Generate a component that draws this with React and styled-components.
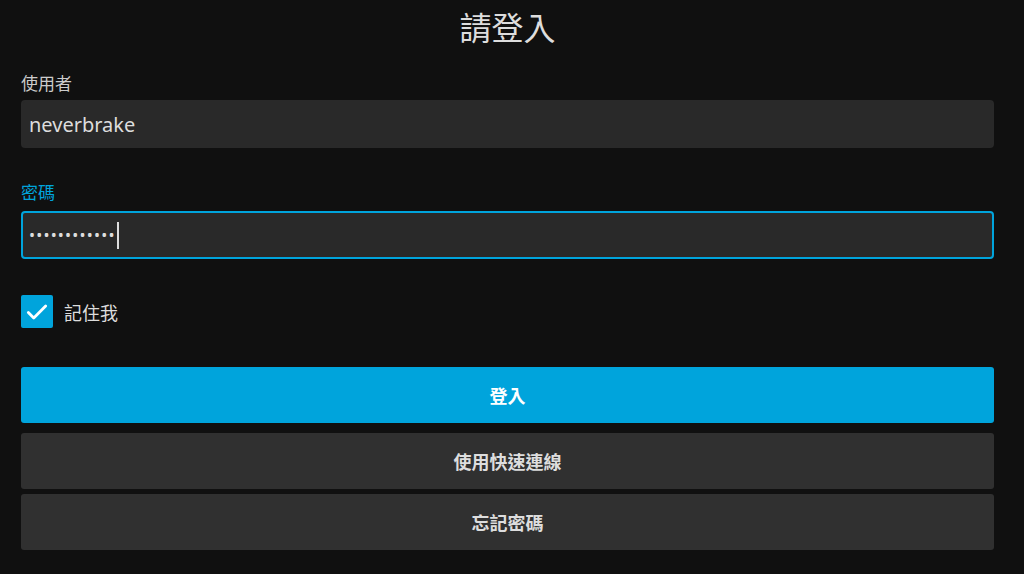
import React from 'react'
import styled, { createGlobalStyle } from 'styled-components'

const Accent = '#00a4dc'
const Font = `"Noto Sans", "Noto Sans CJK TC", sans-serif`

const Global = createGlobalStyle`
html, body { margin:0; padding:0; background:#101010; }
body { font-family:${Font}; color:#ddd; }
`

const Page = styled.div`
padding:0 30px 0 21px;
display:flex;
flex-direction:column;
`
const Title = styled.h1`
margin:6px 0 0;
font-size:32px;
font-weight:400;
line-height:44px;
text-align:center;
color:#ddd;
`
const Label = styled.label`
display:block;
font-size:17px;
line-height:24px;
color:${p => p.active ? Accent : '#ccc'};
margin-top:${p => p.top}px;
margin-bottom:${p => p.bottom}px;
`
const Field = styled.div`
box-sizing:border-box;
height:48px;
background:#292929;
border:2px solid ${p => p.active ? Accent : '#292929'};
border-radius:4px;
padding:0 6px;
display:flex;
align-items:center;
font-size:20px;
color:#ddd;
`
const Dots = styled.span`
font-size:16px;
letter-spacing:1.2px;
color:#ddd;
`
const Caret = styled.span`
width:2px;
height:27px;
background:#ddd;
margin-left:1px;
`
const CheckRow = styled.div`
display:flex;
align-items:center;
gap:11px;
margin-top:36px;
`
const Box = styled.span`
width:32px;
height:33px;
border-radius:2px;
background:${Accent};
display:flex;
align-items:center;
justify-content:center;
`
const CheckText = styled.span`
font-size:18px;
color:#ddd;
`
const Buttons = styled.div`
display:flex;
flex-direction:column;
margin-top:39px;
`
const Button = styled.button`
height:56px;
border:none;
border-radius:3px;
font-family:${Font};
font-size:18px;
font-weight:700;
color:${p => p.primary ? '#fff' : '#ddd'};
background:${p => p.primary ? Accent : '#303030'};
margin-top:${p => p.gap}px;
cursor:pointer;
`

export default function App() {
  return (
    <>
      <Global />
      <Page>
        <Title>請登入</Title>
        <Label top={22} bottom={4}>使用者</Label>
        <Field>neverbrake</Field>
        <Label top={33} bottom={6} active>密碼</Label>
        <Field active>
          <Dots>••••••••••••</Dots>
          <Caret />
        </Field>
        <CheckRow>
          <Box>
            <svg width="26" height="26" viewBox="0 0 24 24" fill="none" stroke="#fff" strokeWidth="2.6" strokeLinecap="round" strokeLinejoin="round">
              <path d="M4 12.5l5 5L20 6.5" />
            </svg>
          </Box>
          <CheckText>記住我</CheckText>
        </CheckRow>
        <Buttons>
          <Button primary gap={0}>登入</Button>
          <Button gap={10}>使用快速連線</Button>
          <Button gap={5}>忘記密碼</Button>
        </Buttons>
      </Page>
    </>
  )
}
